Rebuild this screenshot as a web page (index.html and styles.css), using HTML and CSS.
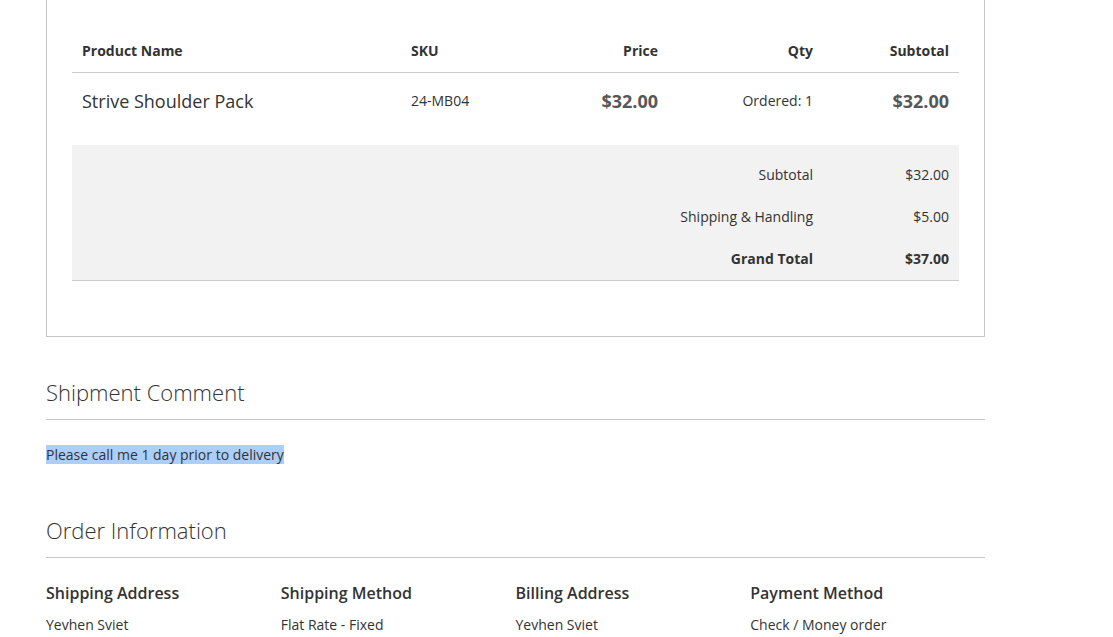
FILE: index.html
```html
<!DOCTYPE html>
<html lang="en">
<head>
<meta charset="utf-8">
<title>Shipment</title>
<link rel="stylesheet" href="styles.css">
</head>
<body>
<main class="page">
  <section class="items-box">
    <table class="items">
      <thead>
        <tr>
          <th class="col-name">Product Name</th>
          <th class="col-sku">SKU</th>
          <th class="col-price num">Price</th>
          <th class="col-qty num">Qty</th>
          <th class="col-sub num">Subtotal</th>
        </tr>
      </thead>
      <tbody>
        <tr>
          <td class="product-name">Strive Shoulder Pack</td>
          <td class="sku">24-MB04</td>
          <td class="num price">$32.00</td>
          <td class="num qty">Ordered: 1</td>
          <td class="num price">$32.00</td>
        </tr>
      </tbody>
      <tfoot>
        <tr class="first">
          <td colspan="4" class="num">Subtotal</td>
          <td class="num">$32.00</td>
        </tr>
        <tr>
          <td colspan="4" class="num">Shipping &amp; Handling</td>
          <td class="num">$5.00</td>
        </tr>
        <tr class="last grand">
          <td colspan="4" class="num">Grand Total</td>
          <td class="num">$37.00</td>
        </tr>
      </tfoot>
    </table>
  </section>

  <section class="block comment-block">
    <h2 class="block-title">Shipment Comment</h2>
    <p class="comment"><span class="selected">Please call me 1 day prior to delivery</span></p>
  </section>

  <section class="block info-block">
    <h2 class="block-title">Order Information</h2>
    <div class="info-grid">
      <div class="info-col">
        <h3>Shipping Address</h3>
        <p>Yevhen Sviet</p>
      </div>
      <div class="info-col">
        <h3>Shipping Method</h3>
        <p>Flat Rate - Fixed</p>
      </div>
      <div class="info-col">
        <h3>Billing Address</h3>
        <p>Yevhen Sviet</p>
      </div>
      <div class="info-col">
        <h3>Payment Method</h3>
        <p>Check / Money order</p>
      </div>
    </div>
  </section>
</main>
</body>
</html>
```

FILE: styles.css
```css
* { box-sizing: border-box; }
html, body {
  margin: 0;
  padding: 0;
  background: #fff;
}
body {
  font-family: "Open Sans", "Liberation Sans", sans-serif;
  font-size: 14px;
  color: #333;
  line-height: 20px;
}
.page {
  width: 939px;
  margin-left: 46px;
}
.items-box {
  border: 1px solid #c6c6c6;
  border-top: 0;
  padding: 31px 25px 55px;
}
.items {
  width: 100%;
  border-collapse: collapse;
}
.items th {
  font-weight: 700;
  font-size: 14px;
  line-height: 20px;
  padding: 10px 10px 11px;
  text-align: left;
  border-bottom: 1px solid #cccccc;
}
.items .col-name { width: 329px; }
.items .col-sku { width: 130px; }
.items .col-price { width: 137px; }
.items .col-qty { width: 155px; }
.items .num { text-align: right; }
.items tbody td {
  padding: 17px 10px 33px;
  line-height: 22px;
  vertical-align: middle;
}
.product-name {
  font-size: 18px;
  font-weight: 400;
}
.sku { font-size: 14px; }
.price {
  font-size: 18px;
  font-weight: 700;
  color: #575757;
}
.qty { font-size: 14px; }
.items tfoot {
  background: #f2f2f2;
}
.items tfoot td {
  padding: 11px 10px;
  line-height: 20px;
  font-size: 14px;
}
.items tfoot tr.first td { padding-top: 20px; }
.items tfoot tr.last td {
  padding-bottom: 11px;
  border-bottom: 1px solid #cccccc;
}
.items tfoot tr.grand td { font-weight: 700; }

.block-title {
  margin: 0;
  font-size: 22px;
  font-weight: 300;
  line-height: 28px;
  padding-bottom: 13px;
  border-bottom: 1px solid #c6c6c6;
}
.comment-block { margin-top: 41px; }
.comment {
  margin: 25px 0 0;
  line-height: 20px;
}
.selected {
  background: #accffa;
}
.info-block { margin-top: 51px; }
.info-grid {
  display: grid;
  grid-template-columns: repeat(4, 1fr);
  margin-top: 25px;
}
.info-col h3 {
  margin: 0;
  font-size: 16px;
  font-weight: 600;
  line-height: 20px;
}
.info-col p {
  margin: 12px 0 0;
  line-height: 20px;
}
```
